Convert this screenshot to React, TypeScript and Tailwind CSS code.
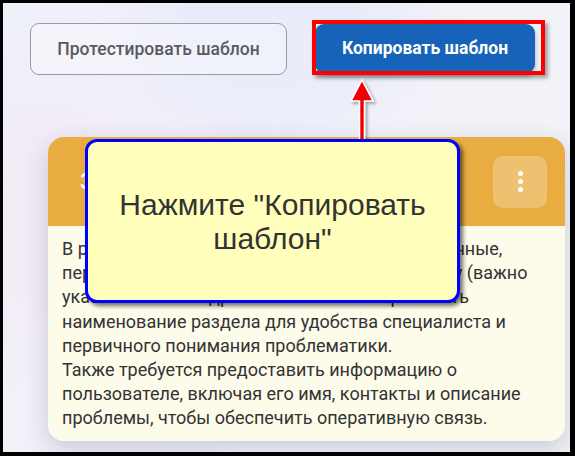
import React from "react";

export default function App() {
  return (
    <div className="w-[575px] h-[456px] bg-black pl-[3px] pt-[3px] pr-[5px] pb-[4px] font-['Roboto',sans-serif]">
      <div className="relative w-full h-full overflow-hidden bg-[linear-gradient(120deg,#eef0fa_0%,#f3f0f9_35%,#f2f3f9_60%,#f2f3f8_100%)]">
        <div className="absolute -left-[80px] top-[90px] w-[240px] h-[240px] rounded-full bg-[#f3e8f4] opacity-60 blur-2xl" />
        <div className="absolute left-[120px] -top-[120px] w-[300px] h-[260px] rounded-full bg-[#e9ecf9] opacity-80 blur-xl" />

        <div className="relative flex flex-col">
          {/* buttons row */}
          <div className="flex items-start gap-[28px] pl-[27px] pt-[20px]">
            <button className="w-[257px] h-[52px] rounded-[9px] border border-[#9a9aa2] bg-white/30 text-[17.5px] font-medium text-[#5a5a60]">
              Протестировать шаблон
            </button>
            <button className="mt-[1px] w-[220px] h-[49px] rounded-[9px] bg-[#1763b9] text-[17.5px] font-bold text-white shadow-[0_3px_5px_rgba(0,0,0,0.3)]">
              Копировать шаблон
            </button>
          </div>

          {/* card */}
          <div className="ml-[45px] mt-[62px] w-[517px] rounded-[16px] overflow-hidden shadow-[0_8px_24px_rgba(60,60,100,0.22)]">
            <div className="h-[89px] bg-[#e9ac40] flex items-center justify-between pl-[32px] pr-[18px]">
              <span className="text-[22px] font-medium text-white">Запрос в техподдержку</span>
              <div className="w-[54px] h-[52px] rounded-[10px] bg-white/25 flex flex-col items-center justify-center gap-[3px]">
                <span className="w-[5px] h-[5px] rounded-full bg-white" />
                <span className="w-[5px] h-[5px] rounded-full bg-white" />
                <span className="w-[5px] h-[5px] rounded-full bg-white" />
              </div>
            </div>
            <div className="bg-[#fdfbe9] px-[14px] pt-[11px] pb-[10px] text-[18px] leading-[24.2px] text-[#333333] whitespace-nowrap">
              В разделе нужно указать все необходимые данные,
              <br />
              перечень вопросов и ссылку на вашу страницу (важно
              <br />
              указать точный адрес и обязательно прописать
              <br />
              наименование раздела для удобства специалиста и
              <br />
              первичного понимания проблематики.
              <br />
              Также требуется предоставить информацию о
              <br />
              пользователе, включая его имя, контакты и описание
              <br />
              проблемы, чтобы обеспечить оперативную связь.
            </div>
          </div>
        </div>

        {/* red highlight frame */}
        <div className="absolute left-[309px] top-[17px] w-[233px] h-[55px] border-[4px] border-[#ff0000] shadow-[3px_3px_4px_rgba(0,0,0,0.35)]" />

        {/* arrow */}
        <svg
          className="absolute left-[339px] top-[74px]"
          width="40"
          height="66"
          viewBox="0 0 40 66"
        >
          <defs>
            <filter id="sh" x="-50%" y="-50%" width="200%" height="200%">
              <feDropShadow dx="2" dy="2" stdDeviation="1.5" floodColor="#000" floodOpacity="0.35" />
            </filter>
          </defs>
          <path
            d="M20 3 L31 24 L22.5 24 L22.5 66 L17.5 66 L17.5 24 L9 24 Z"
            fill="#ee0000"
            stroke="#ffffff"
            strokeWidth="1.6"
            strokeLinejoin="miter"
            filter="url(#sh)"
          />
        </svg>

        {/* callout */}
        <div className="absolute left-[82px] top-[136px] w-[375px] h-[164px] rounded-[12px] border-[3px] border-[#0000ff] bg-[#ffffbb] shadow-[3px_3px_4px_rgba(0,0,0,0.55)] flex items-center justify-center">
          <p className="text-center font-['Liberation_Sans',Arial,sans-serif] text-[30px] leading-[34px] text-[#333333] pt-[2px]">
            Нажмите "Копировать
            <br />
            шаблон"
          </p>
        </div>
      </div>
    </div>
  );
}
